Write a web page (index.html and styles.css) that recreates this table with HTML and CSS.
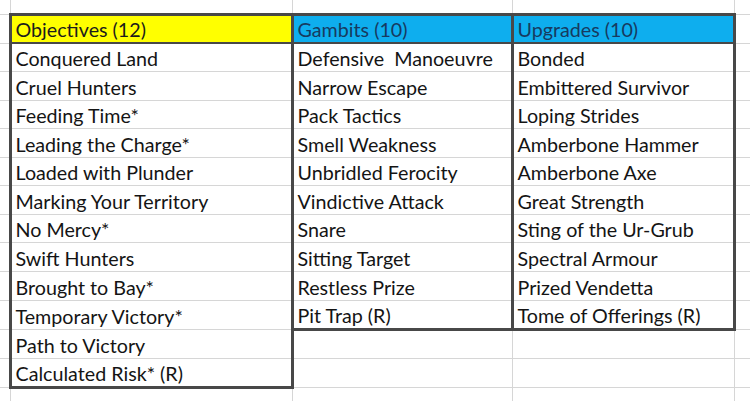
FILE: index.html
```html
<!DOCTYPE html>
<html>
<head>
<meta charset="utf-8">
<link rel="stylesheet" href="styles.css">
</head>
<body>
<table class="sheet">
  <colgroup>
    <col class="c-stub">
    <col class="c-obj">
    <col class="c-gam">
    <col class="c-upg">
    <col class="c-rest">
  </colgroup>
  <tr class="r-top"><td></td><td></td><td></td><td></td><td></td></tr>
  <tr class="r-tall">
    <td></td>
    <td class="box hd hd-yellow">Objectives (12)</td>
    <td class="box hd hd-blue">Gambits (10)</td>
    <td class="box hd hd-blue">Upgrades (10)</td>
    <td></td>
  </tr>
  <tr class="r-short"><td></td><td class="box">Conquered Land</td><td class="box">Defensive  Manoeuvre</td><td class="box">Bonded</td><td></td></tr>
  <tr class="r-tall"><td></td><td class="box">Cruel Hunters</td><td class="box">Narrow Escape</td><td class="box">Embittered Survivor</td><td></td></tr>
  <tr class="r-short"><td></td><td class="box">Feeding Time*</td><td class="box">Pack Tactics</td><td class="box">Loping Strides</td><td></td></tr>
  <tr class="r-tall"><td></td><td class="box">Leading the Charge*</td><td class="box">Smell Weakness</td><td class="box">Amberbone Hammer</td><td></td></tr>
  <tr class="r-short"><td></td><td class="box">Loaded with Plunder</td><td class="box">Unbridled Ferocity</td><td class="box">Amberbone Axe</td><td></td></tr>
  <tr class="r-tall"><td></td><td class="box">Marking Your Territory</td><td class="box">Vindictive Attack</td><td class="box">Great Strength</td><td></td></tr>
  <tr class="r-short"><td></td><td class="box">No Mercy*</td><td class="box">Snare</td><td class="box">Sting of the Ur-Grub</td><td></td></tr>
  <tr class="r-tall"><td></td><td class="box">Swift Hunters</td><td class="box">Sitting Target</td><td class="box">Spectral Armour</td><td></td></tr>
  <tr class="r-tall"><td></td><td class="box">Brought to Bay*</td><td class="box">Restless Prize</td><td class="box">Prized Vendetta</td><td></td></tr>
  <tr class="r-tall"><td></td><td class="box">Temporary Victory*</td><td class="box last">Pit Trap (R)</td><td class="box last">Tome of Offerings (R)</td><td></td></tr>
  <tr class="r-tall"><td></td><td class="box">Path to Victory</td><td></td><td></td><td></td></tr>
  <tr class="r-tall"><td></td><td class="box last">Calculated Risk* (R)</td><td></td><td></td><td></td></tr>
  <tr class="r-bottom"><td></td><td></td><td></td><td></td><td></td></tr>
</table>
</body>
</html>
```

FILE: styles.css
```css
html, body {
  margin: 0;
  padding: 0;
  background: #ffffff;
  overflow: hidden;
}

.sheet {
  border-collapse: collapse;
  table-layout: fixed;
  width: 750px;
  border: hidden;
  font-family: Lato, "Liberation Sans", sans-serif;
  font-size: 19.7px;
  color: #141414;
}

.c-stub { width: 10px; }
.c-obj { width: 282px; }
.c-gam { width: 220px; }
.c-upg { width: 222px; }
.c-rest { width: 16px; }

.sheet td {
  border: 1px solid #d6d6d6;
  padding: 0 4px 1px 4px;
  vertical-align: bottom;
  white-space: pre;
  overflow: hidden;
  line-height: 22px;
}

.r-top { height: 14px; }
.r-tall { height: 29px; }
.r-short { height: 28px; }
.r-bottom { height: 16px; }

.sheet td.box {
  border-left: 3px solid #484848;
  border-right: 3px solid #484848;
}

.sheet td.hd {
  border-top: 3px solid #484848;
  border-bottom: 2px solid #484848;
}

.sheet td.last {
  border-bottom: 3px solid #484848;
}

.hd-yellow {
  background: #ffff00;
  color: #1c1c1c;
}

.hd-blue {
  background: #0eaeee;
  color: #173a60;
}
```
